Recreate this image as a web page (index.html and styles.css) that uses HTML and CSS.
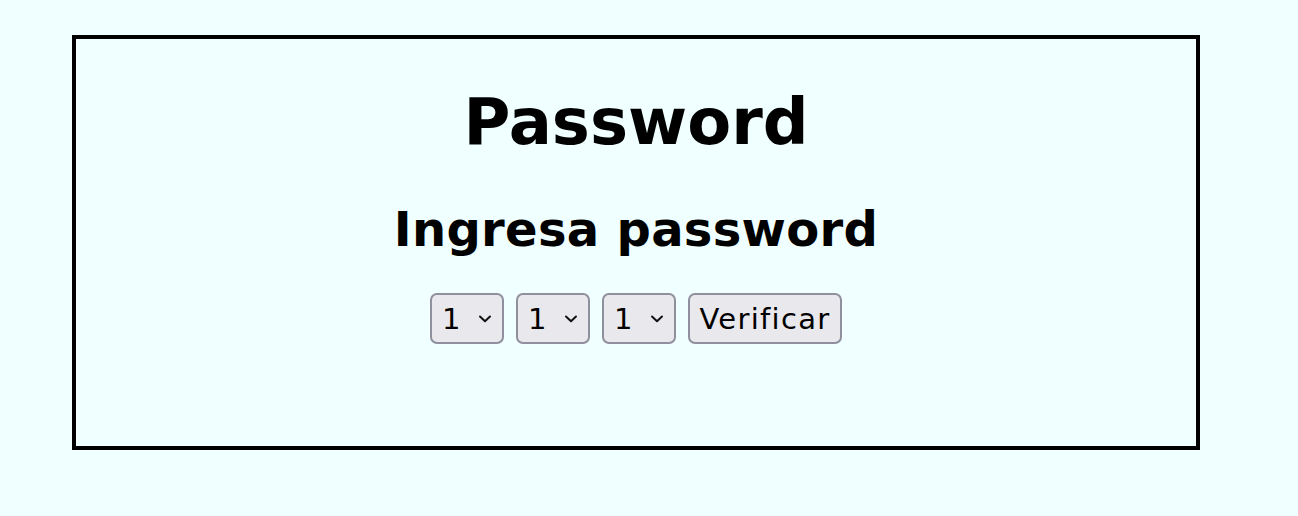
FILE: index.html
```html
<!DOCTYPE html>
<html lang="es">
<head>
<meta charset="utf-8">
<title>Password</title>
<link rel="stylesheet" href="styles.css">
</head>
<body>
<div class="panel">
  <h1 class="title">Password</h1>
  <h2 class="subtitle">Ingresa password</h2>
  <form class="controls">
    <span class="pick"><select class="sel"><option>1</option><option>2</option><option>3</option></select><svg class="chev" width="14" height="8" viewBox="0 0 14 8"><path d="M2 1.5 L7 6.2 L12 1.5" fill="none" stroke="#111" stroke-width="2" stroke-linecap="round" stroke-linejoin="round"/></svg></span>
    <span class="pick"><select class="sel"><option>1</option><option>2</option><option>3</option></select><svg class="chev" width="14" height="8" viewBox="0 0 14 8"><path d="M2 1.5 L7 6.2 L12 1.5" fill="none" stroke="#111" stroke-width="2" stroke-linecap="round" stroke-linejoin="round"/></svg></span>
    <span class="pick"><select class="sel"><option>1</option><option>2</option><option>3</option></select><svg class="chev" width="14" height="8" viewBox="0 0 14 8"><path d="M2 1.5 L7 6.2 L12 1.5" fill="none" stroke="#111" stroke-width="2" stroke-linecap="round" stroke-linejoin="round"/></svg></span>
    <button type="button" class="btn">Verificar</button>
  </form>
</div>
</body>
</html>
```
FILE: styles.css
```css
html, body {
  margin: 0;
  padding: 0;
  background: #f0ffff;
}
body {
  font-family: "DejaVu Sans", Verdana, sans-serif;
  color: #000;
}
.panel {
  box-sizing: border-box;
  width: 1128px;
  height: 415px;
  margin: 35px 0 0 72px;
  border: 4px solid #000;
  padding-top: 46px;
  display: flex;
  flex-direction: column;
  align-items: center;
}
.title {
  margin: 0;
  font-size: 64px;
  line-height: 75px;
  font-weight: bold;
}
.subtitle {
  margin: 41px 0 0;
  font-size: 48px;
  line-height: 56px;
  font-weight: bold;
  letter-spacing: 0.3px;
}
.controls {
  margin: 36px 0 0;
  display: flex;
  gap: 12px;
  align-items: center;
}
.pick {
  position: relative;
  display: block;
  height: 51px;
}
.sel {
  -webkit-appearance: none;
  appearance: none;
  box-sizing: border-box;
  width: 74px;
  height: 51px;
  padding: 0 0 0 10px;
  border: 2px solid #8f8f9d;
  border-radius: 7px;
  background: #e9e9ed;
  font-family: "DejaVu Sans", Verdana, sans-serif;
  font-size: 29px;
  color: #000;
}
.chev {
  position: absolute;
  right: 12px;
  top: 22px;
  pointer-events: none;
}
.btn {
  box-sizing: border-box;
  width: 154px;
  height: 51px;
  padding: 0;
  border: 2px solid #8f8f9d;
  border-radius: 7px;
  background: #e9e9ed;
  font-family: "DejaVu Sans", Verdana, sans-serif;
  font-size: 29px;
  letter-spacing: 1.3px;
  color: #000;
}
```
